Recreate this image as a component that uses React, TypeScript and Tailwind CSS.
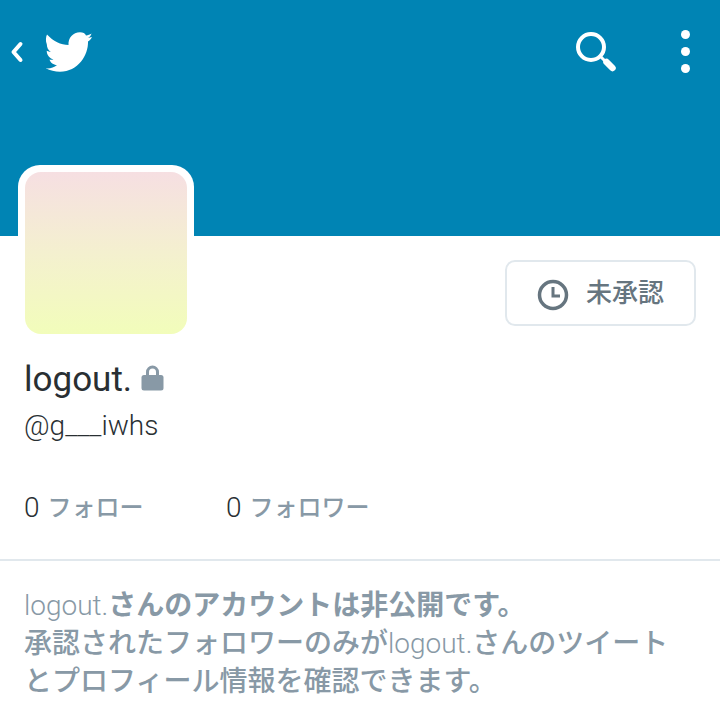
const fontStack = { fontFamily: "Roboto, 'Noto Sans CJK JP', sans-serif" };

function BirdIcon() {
  return (
    <svg width="48" height="42" viewBox="45 31 48 42" fill="white" className="ml-[21px]">
      <path d="M47 34.5 C53 41 61 45 68.5 45 C68 38 73 32.3 80 32.3 C83 32.3 85 33.5 86 35.5 C88 35.3 90 34.5 91.5 33.5 C91 35.5 89.5 37 88 38 L92 37 C91 39 89.5 40.5 88 41.5 C88.5 55 78 71.7 60 71.7 C55 71.7 50 70.3 45.7 68.3 C50 68.8 54 67.5 57 65 C53.5 65 50.5 62.7 49.5 59.5 C51 59.8 52.3 59.8 53.5 59.4 C49.5 58.5 46.7 55 46.7 50.8 C48 51.5 49.3 51.9 50.8 52 C48.3 50.2 46.8 47.5 46.8 44.3 C45.5 41 45.8 37 47 34.5 Z" />
    </svg>
  );
}

function SearchIcon() {
  return (
    <svg width="41" height="40" viewBox="0 0 41 40" fill="none" stroke="white" strokeLinecap="round" className="mt-[2px]">
      <circle cx="15" cy="15" r="13" strokeWidth="4" />
      <path d="M25 25 L29 29" strokeWidth="3" />
      <path d="M30.5 30 L36.5 36" strokeWidth="6.5" />
    </svg>
  );
}

function ClockIcon() {
  return (
    <svg width="32" height="32" viewBox="0 0 32 32" fill="none" stroke="#66757f" strokeWidth="3.5" className="mt-[3px]">
      <circle cx="16" cy="16" r="13.5" />
      <path d="M16 8 V17 H23" strokeWidth="3" />
    </svg>
  );
}

function LockIcon() {
  return (
    <svg width="23" height="27" viewBox="0 0 23 27" fill="#8899a6" className="mb-[3px]">
      <path d="M5 12 V8 a6.5 6.5 0 0 1 13 0 V12 h-3 V8 a3.5 3.5 0 0 0 -7 0 V12 Z" />
      <rect x="0.5" y="11" width="22" height="15.5" rx="2.5" />
    </svg>
  );
}

export default function App() {
  return (
    <div className="w-[720px] h-[721px] bg-white overflow-hidden" style={fontStack}>
      <div className="h-[236px] bg-[#0084b4] flex items-start justify-between pt-[30px]">
        <div className="flex items-center pl-[10px] mt-[1px]">
          <svg width="14" height="22" viewBox="0 0 14 22" fill="none" stroke="white" strokeWidth="4" strokeLinecap="round" strokeLinejoin="round">
            <path d="M10.5 3 L3.5 11 L10.5 19" />
          </svg>
          <BirdIcon />
        </div>
        <div className="flex items-start pr-[30px]">
          <SearchIcon />
          <div className="ml-[64px] flex flex-col gap-[8px]">
            <div className="w-[9px] h-[9px] rounded-full bg-white" />
            <div className="w-[9px] h-[9px] rounded-full bg-white" />
            <div className="w-[9px] h-[9px] rounded-full bg-white" />
          </div>
        </div>
      </div>

      <div className="flex items-start justify-between pl-[18px] pr-[24px]">
        <div className="mt-[-71px] w-[176px] h-[176px] bg-white rounded-[22px] p-[7px]">
          <div className="w-full h-full rounded-[16px] bg-gradient-to-b from-[#f6dfe2] via-[#f4f0cf] to-[#f2fdba]" />
        </div>
        <div className="mt-[24px] w-[191px] h-[66px] border-2 border-[#e1e8ed] rounded-[10px] flex items-center justify-center gap-[17px]">
          <ClockIcon />
          <span className="text-[26px] font-medium text-[#66757f]">未承認</span>
        </div>
      </div>

      <div className="pl-[24px] mt-[16px] flex items-center gap-[9px] h-[44px]">
        <span className="text-[35px] text-[#292f33] pt-[2px]">logout.</span>
        <LockIcon />
      </div>
      <div className="pl-[24px] mt-[7px] h-[36px] text-[28px] leading-[36px] font-light text-[#292f33]">@g___iwhs</div>

      <div className="pl-[24px] mt-[44px] h-[40px] flex items-center">
        <div className="w-[202px] flex items-center gap-[8px]">
          <span className="text-[28px] font-light text-[#292f33]">0</span>
          <span className="text-[24px] font-medium text-[#8899a6]">フォロー</span>
        </div>
        <div className="flex items-center gap-[8px]">
          <span className="text-[28px] font-light text-[#292f33]">0</span>
          <span className="text-[24px] font-medium text-[#8899a6]">フォロワー</span>
        </div>
      </div>

      <div className="mt-[31px] border-t-2 border-[#e1e8ed] pt-[26px] pl-[24px] text-[28px] leading-[38px] text-[#8899a6] font-medium whitespace-nowrap">
        <div className="font-bold">
          <span className="font-light">logout.</span>さんのアカウントは非公開です。
        </div>
        <div>
          承認されたフォロワーのみが<span className="font-light">logout.</span>さんのツイート
        </div>
        <div>とプロフィール情報を確認できます。</div>
      </div>
    </div>
  );
}
